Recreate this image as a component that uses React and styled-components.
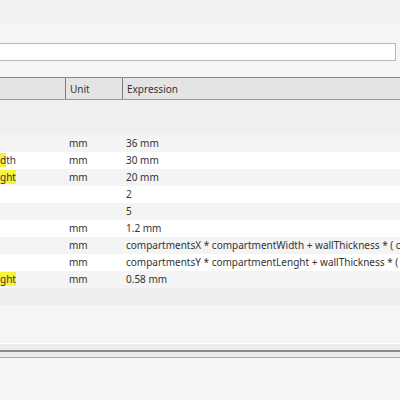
import React from "react";
import styled, { createGlobalStyle } from "styled-components";

const Global = createGlobalStyle`
  html, body { margin: 0; padding: 0; background: #f5f5f5; }
  body { font-family: "Noto Sans", "Open Sans", sans-serif; }
`;

const Page = styled.div`
  width: 400px;
  height: 400px;
  overflow: hidden;
  background: #f5f5f5;
  display: flex;
  flex-direction: column;
`;

const TopBar = styled.div`
  height: 24px;
  flex: none;
  background: #f2f2f2;
`;

const SearchRow = styled.div`
  padding: 19px 4px 0 0;
  margin-left: -2px;
`;

const SearchInput = styled.div`
  height: 16px;
  background: #ffffff;
  border: 1px solid #b8b8b8;
`;

const Table = styled.div`
  margin-top: 16px;
  display: flex;
  flex-direction: column;
`;

const Columns = styled.div`
  display: grid;
  grid-template-columns: 66px 57px 1fr;
  align-items: center;
`;

const Header = styled(Columns)`
  height: 21px;
  background: #e4e4e4;
  border-top: 1px solid #8a8a8a;
  border-bottom: 1px solid #9a9a9a;
`;

const HeadCell = styled.div`
  height: 100%;
  display: flex;
  align-items: center;
  padding-left: ${(p) => p.$pad ?? 4}px;
  font-size: 10px;
  color: #333;
  border-right: ${(p) => (p.$sep ? "1px solid #7c7c7c" : "none")};
  box-sizing: border-box;
`;

const GroupArea = styled.div`
  height: 35px;
  background: #efefef;
`;

const Row = styled(Columns)`
  height: 17px;
  background: ${(p) => (p.$alt ? "#f4f4f4" : "#ffffff")};
`;

const Cell = styled.div`
  padding-left: ${(p) => p.$pad ?? 0}px;
  font-size: 10px;
  color: #333;
  white-space: nowrap;
  overflow: hidden;
  line-height: 17px;
`;

const Mark = styled.span`
  background: #f8f23a;
`;

const FooterBand = styled.div`
  height: 17px;
  background: #eeeeee;
`;

const Blank = styled.div`
  height: 38px;
  background: #f5f5f5;
`;

const Splitter = styled.div`
  display: flex;
  flex-direction: column;
`;

const Line = styled.div`
  height: ${(p) => p.$h}px;
  background: ${(p) => p.$c};
`;

const rows = [
  { name: null, unit: "mm", expr: "36 mm" },
  { name: [["d", true], ["th", false]], unit: "mm", expr: "30 mm" },
  { name: [["ght", true]], unit: "mm", expr: "20 mm" },
  { name: null, unit: "", expr: "2" },
  { name: null, unit: "", expr: "5" },
  { name: null, unit: "mm", expr: "1.2 mm" },
  {
    name: null,
    unit: "mm",
    expr: "compartmentsX * compartmentWidth + wallThickness * ( c",
  },
  {
    name: null,
    unit: "mm",
    expr: "compartmentsY * compartmentLenght + wallThickness * ( c",
  },
  { name: [["ght", true]], unit: "mm", expr: "0.58 mm" },
];

export default function App() {
  return (
    <>
      <Global />
      <Page>
        <TopBar />
        <SearchRow>
          <SearchInput />
        </SearchRow>
        <Table>
          <Header>
            <HeadCell $sep />
            <HeadCell $sep>Unit</HeadCell>
            <HeadCell>Expression</HeadCell>
          </Header>
          <GroupArea />
          {rows.map((r, i) => (
            <Row key={i} $alt={i % 2 === 0}>
              <Cell>
                {r.name &&
                  r.name.map(([t, hl], j) =>
                    hl ? <Mark key={j}>{t}</Mark> : <span key={j}>{t}</span>
                  )}
              </Cell>
              <Cell $pad={3}>{r.unit}</Cell>
              <Cell $pad={3}>{r.expr}</Cell>
            </Row>
          ))}
          <FooterBand />
          <Blank />
        </Table>
        <Splitter>
          <Line $h={1} $c="#ffffff" />
          <Line $h={6} $c="#ececec" />
          <Line $h={2} $c="#8a8a8a" />
          <Line $h={5} $c="#ececec" />
          <Line $h={1} $c="#a9a9a9" />
        </Splitter>
      </Page>
    </>
  );
}
